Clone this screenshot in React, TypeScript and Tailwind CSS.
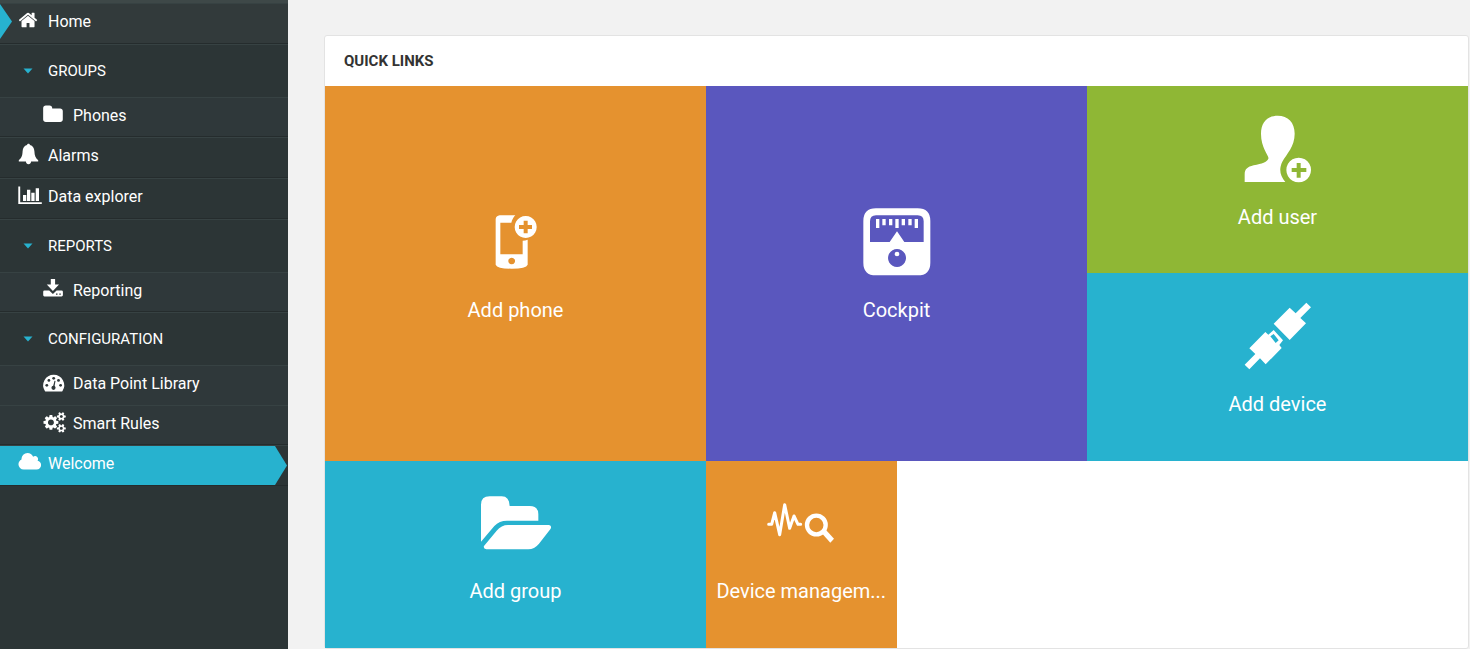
import type { ReactNode } from "react";

const HOME =
  "M1472 992v480q0 26-19 45t-45 19h-384v-384h-256v384h-384q-26 0-45-19t-19-45v-480q0-1 .5-3t.5-3l575-474 575 474q1 2 1 6zm223-69l-62 74q-8 9-21 11h-3q-13 0-21-7l-692-577-692 577q-12 8-24 7-13-2-21-11l-62-74q-8-10-7-23.5t11-21.5l719-599q32-26 76-26t76 26l244 204v-195q0-14 9-23t23-9h192q14 0 23 9t9 23v408l219 182q10 8 11 21.5t-7 23.5z";
const FOLDER =
  "M1728 608v704q0 92-66 158t-158 66h-1216q-92 0-158-66t-66-158v-960q0-92 66-158t158-66h320q92 0 158 66t66 158v32h672q92 0 158 66t66 158z";
const CLOUD =
  "M1984 1152q0 159-112.5 271.5t-271.5 112.5h-1088q-185 0-316.5-131.5t-131.5-316.5q0-132 71-241.5t187-163.5q-2-28-2-43 0-212 150-362t362-150q158 0 286.5 88t187.5 230q70-62 166-62 106 0 181 75t75 181q0 75-41 138 129 30 213 134.5t84 239.5z";
const COGS =
  "M896 896q0-106-75-181t-181-75-181 75-75 181 75 181 181 75 181-75 75-181zm768 512q0-52-38-90t-90-38-90 38-38 90q0 53 37.5 90.5t90.5 37.5 90.5-37.5 37.5-90.5zm0-1024q0-52-38-90t-90-38-90 38-38 90q0 53 37.5 90.5t90.5 37.5 90.5-37.5 37.5-90.5zm-384 421v185q0 10-7 19.5t-16 10.5l-155 24q-11 35-32 76 34 48 90 115 7 11 7 20 0 12-7 19-23 30-82.5 89.5t-78.5 59.5q-11 0-21-7l-115-90q-37 19-77 31-11 108-23 155-7 24-30 24h-186q-11 0-20-7.5t-10-17.5l-23-153q-34-10-75-31l-118 89q-7 7-20 7-11 0-21-8-144-133-144-160 0-9 7-19 10-14 41-53t47-61q-23-44-35-82l-152-24q-10-1-17-9.5t-7-19.5v-185q0-10 7-19.5t16-10.5l155-24q11-35 32-76-34-48-90-115-7-11-7-20 0-12 7-20 22-30 82-89t79-59q11 0 21 7l115 90q34-18 77-32 11-108 23-154 7-24 30-24h186q11 0 20 7.5t10 17.5l23 153q34 10 75 31l118-89q8-7 20-7 11 0 21 8 144 133 144 160 0 8-7 19-12 16-42 54t-45 60q23 48 34 82l152 23q10 2 17 10.5t7 19.5zm640 533v140q0 16-149 31-12 27-30 52 51 113 51 138 0 4-4 7-122 71-124 71-8 0-46-47t-52-68q-20 2-30 2t-30-2q-14 21-52 68t-46 47q-2 0-124-71-4-3-4-7 0-25 51-138-18-25-30-52-149-15-149-31v-140q0-16 149-31 13-29 30-52-51-113-51-138 0-4 4-7 4-2 35-20t59-34 30-16q8 0 46 46.5t52 67.5q20-2 30-2t30 2q51-71 92-112l6-2q4 0 124 70 4 3 4 7 0 25-51 138 17 23 30 52 149 15 149 31zm0-1024v140q0 16-149 31-12 27-30 52 51 113 51 138 0 4-4 7-122 71-124 71-8 0-46-47t-52-68q-20 2-30 2t-30-2q-14 21-52 68t-46 47q-2 0-124-71-4-3-4-7 0-25 51-138-18-25-30-52-149-15-149-31v-140q0-16 149-31 13-29 30-52-51-113-51-138 0-4 4-7 4-2 35-20t59-34 30-16q8 0 46 46.5t52 67.5q20-2 30-2t30 2q51-71 92-112l6-2q4 0 124 70 4 3 4 7 0 25-51 138 17 23 30 52 149 15 149 31z";

function NavIcon({ children }: { children: ReactNode }) {
  return (
    <svg viewBox="0 0 24 24" fill="currentColor" aria-hidden="true" className="-mt-1 size-6 shrink-0 overflow-visible">
      {children}
    </svg>
  );
}

function NavItem({ label, nested, className = "", children }: { label: string; nested?: boolean; className?: string; children: ReactNode }) {
  return (
    <li className={`relative border-t border-b border-t-[#374243] border-b-[#252c2d] ${nested ? "not-last:border-b-[#2f383a]" : ""}`}>
      <a
        href="#"
        className={`flex items-center gap-1.5 pb-[3px] ${nested ? "h-[38px] bg-[#2f383a] pl-[43px]" : "h-[39px] pl-[18px]"} ${className}`}
      >
        <NavIcon>{children}</NavIcon>
        {label}
      </a>
    </li>
  );
}

function NavGroup({ label, children }: { label: string; children: ReactNode }) {
  return (
    <li>
      <button type="button" className="flex h-[53px] w-full items-center gap-[15px] border-t border-[#374243] pl-[23px] text-[15px] uppercase">
        <svg viewBox="0 0 10 6" aria-hidden="true" className="h-1.5 w-2.5 fill-[#27b2cf]">
          <path d="M.5.5h9L5 5.6z" />
        </svg>
        {label}
      </button>
      <ul>{children}</ul>
    </li>
  );
}

function Tile({ label, viewBox, className, children }: { label: string; viewBox: string; className: string; children: ReactNode }) {
  return (
    <a href="#" className={`flex min-w-0 flex-col items-center justify-center gap-5 px-2 pb-3.5 text-white ${className}`}>
      <svg viewBox={viewBox} fill="currentColor" aria-hidden="true" className="size-[68px] shrink-0 overflow-visible">
        {children}
      </svg>
      <span className="text-xl leading-7 whitespace-nowrap">{label}</span>
    </a>
  );
}

export default function App() {
  return (
    <div className="flex min-h-screen bg-[#f2f2f2] font-['Roboto','Liberation_Sans',sans-serif]">
      <nav aria-label="Main" className="w-72 shrink-0 border-t-3 border-[#3e4848] bg-[#2c3536] text-base text-white">
        <ul>
          <NavItem label="Home" className="bg-[#323a3b] before:absolute before:top-0 before:left-0 before:h-[35px] before:w-3 before:bg-[#27b2cf] before:[clip-path:polygon(0_0,100%_50%,0_100%)]">
            <path transform="translate(-.1 1.9) scale(.0113)" d={HOME} />
          </NavItem>
          <NavGroup label="Groups">
            <NavItem label="Phones" nested>
              <path transform="translate(-.6 2) scale(.0118)" d={FOLDER} />
            </NavItem>
          </NavGroup>
          <NavItem label="Alarms">
            <path d="M10.5 1.8c.9 0 1.4.6 1.5 1.3 2.8.8 4.2 3 4.4 6.2.2 4.4 1 6.7 3.8 8.9v1.2h-7.1c-.2 1.8-1.2 2.8-2.6 2.8s-2.4-1-2.6-2.8H.8v-1.2c2.8-2.2 3.6-4.5 3.8-8.9.2-3.2 1.6-5.4 4.4-6.2.1-.7.6-1.3 1.5-1.3z" />
          </NavItem>
          <NavItem label="Data explorer">
            <path d="M.3 3.5h1.9v15.7h21.6v1.8H.3zM5 12h3.3v6H5zM9 6.8h3.3V18H9zM13.3 9.8h3.3V18h-3.3zM17.7 5.2H21V18h-3.3z" />
          </NavItem>
          <NavGroup label="Reports">
            <NavItem label="Reporting" nested>
              <path fillRule="evenodd" d="M7.8 2h4.3v5.5H16l-6.1 6.4-6.1-6.4h4zM1.4 13.4h4.8L9.9 17l3.7-3.6h4.9q1.4 0 1.4 1.4v3.3q0 1.4-1.4 1.4H1.4Q.2 19.5.2 18.1V14.8q0-1.4 1.2-1.4zM13 16.5v1.2h1.5v-1.2zM16.3 16.5v1.2h1.5v-1.2z" />
            </NavItem>
          </NavGroup>
          <NavGroup label="Configuration">
            <NavItem label="Data Point Library" nested>
              <path d="M10.7 4.8A10.500 10.500 0 0 1 19.500 21q-.4.500-1 .5H2.900q-.6 0-1-.5A10.500 10.500 0 0 1 10.700 4.800z" />
              <g className="fill-[#2f383a]">
                <circle cx="3.8" cy="15.3" r="1.4" />
                <circle cx="5.9" cy="10.4" r="1.4" />
                <circle cx="10.7" cy="8.3" r="1.4" />
                <circle cx="15.5" cy="10.4" r="1.4" />
                <circle cx="17.6" cy="15.3" r="1.4" />
                <circle cx="10.5" cy="17.8" r="2.1" />
                <path d="M11.5 10.8l1 .3-1.1 6.2-1.5-.4z" />
              </g>
            </NavItem>
            <NavItem label="Smart Rules" nested>
              <path transform="translate(.5 2) scale(.0116)" d={COGS} />
            </NavItem>
          </NavGroup>
          <NavItem label="Welcome" className="bg-[#27b2cf] [clip-path:polygon(0_0,calc(100%-13px)_0,calc(100%-1px)_50%,calc(100%-13px)_100%,0_100%)]">
            <path transform="translate(-.3 1.5) scale(.0118)" d={CLOUD} />
          </NavItem>
        </ul>
      </nav>

      <main className="min-w-0 flex-1 pt-[35px] pr-px pl-9">
        <section className="rounded-[3px] border border-[#e3e3e3] bg-white">
          <h2 className="px-[19px] py-[15px] text-[15px] leading-5 font-bold text-[#333] uppercase">Quick links</h2>
          <div className="grid h-[562px] grid-cols-6 grid-rows-3">
            <Tile label="Add phone" viewBox="66 27 204 204" className="col-span-2 row-span-2 bg-[#e5922f]">
              <path fillRule="evenodd" d="M119 49h47c-6 6-10 14-12 22h-33v95h67v-41q8 0 15-3v75q-4 12-48 12-43 0-48-12V60q1-9 12-11zM155 176a10 10 0 1 0 .1 0z" />
              <path fillRule="evenodd" d="M197 51a33 33 0 1 0 .1 0zM191 65h12v13h13v12h-13v13h-12V90h-14V78h14z" />
            </Tile>
            <Tile label="Cockpit" viewBox="69 42 204 204" className="col-span-2 row-span-2 bg-[#5a57be]">
              <path fillRule="evenodd" d="M108 43h125q38 0 38 38v125q0 38-38 38H108q-38 0-38-38V81q0-38 38-38zM108 64q-18 0-18 18v62h59l22-32 22 32h58V82q0-18-18-18zM171 165a27 27 0 1 0 .1 0z" />
              <circle cx="171" cy="180" r="7" />
              <path d="M108 75h10v27h-10zM127 75h10v19h-10zM147 75h10v19h-10zM166 75h10v27h-10zM185 75h10v19h-10zM205 75h10v19h-10zM224 75h10v27h-10z" />
            </Tile>
            <Tile label="Add user" viewBox="73 45 204 204" className="col-span-2 bg-[#8fb735]">
              <path d="M174 47c31 0 51 20 51 54 0 38-24 61-37 84-11 22-7 43 9 61H75v-22c0-17 8-23 27-28 26-6 39-9 44-20 4-8-22-30-22-75 0-34 19-54 50-54z" />
              <path fillRule="evenodd" d="M237 173a37 37 0 1 0 .1 0zM231 189h12v15h17v12h-17v17h-12v-17h-15v-12h15z" />
            </Tile>
            <Tile label="Add device" viewBox="73 39 204 204" className="col-span-2 bg-[#27b2cf]">
              <path d="M210 56l18 17 32-32 14 14-32 32 17 16-49 50-48-49z" />
              <path fillRule="evenodd" d="M137 129l9 8 16-14 28 31-11 14 7 9-48 49-17-18-32 33-14-14 32-32-18-17zM152 142l16 20 9-8-15-19z" />
            </Tile>
            <Tile label="Add group" viewBox="66 30 204 204" className="col-span-2 bg-[#27b2cf]">
              <path d="M63 77q0-25 26-25h36q23 0 24 29h60q26 0 26 25v19h-94q-23 0-38 16l-40 47z" />
              <path d="M144 138h123q9 2 5 11l-35 45q-14 17-32 17H79q-10-2-7-10l38-46q14-17 34-17z" />
            </Tile>
            <Tile label="Device managem..." viewBox="202 120 204 204" className="bg-[#e5922f]">
              <path d="M207 226h9l9-35 15 66 15-90 15 71 13-37 12 25h8" fill="none" stroke="currentColor" strokeWidth="9" strokeLinecap="round" strokeLinejoin="round" />
              <circle cx="350" cy="228" r="28" fill="none" stroke="currentColor" strokeWidth="13" />
              <path d="M366 252l11-11 26 28-11 12z" />
            </Tile>
          </div>
        </section>
      </main>
    </div>
  );
}
